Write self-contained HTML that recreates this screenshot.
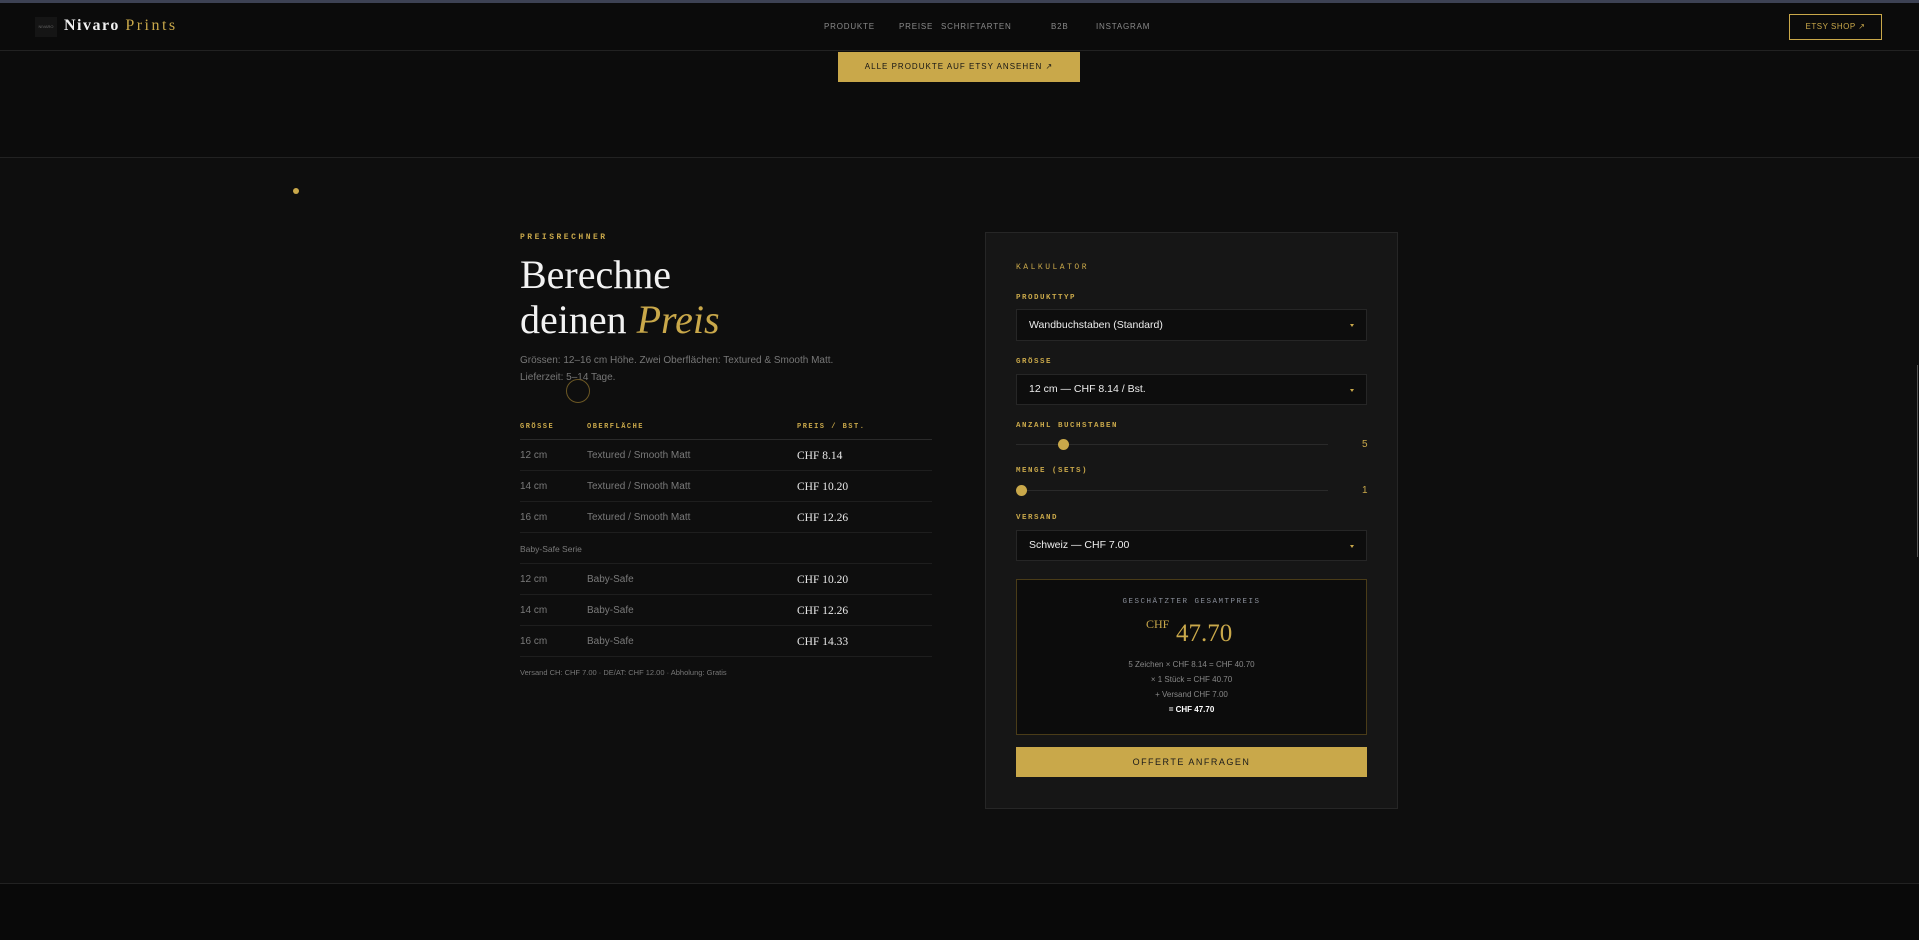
<!DOCTYPE html>
<html><head><meta charset="utf-8"><style>
*{margin:0;padding:0;box-sizing:border-box}
body{width:1919px;height:940px;background:#0c0c0c;font-family:"Liberation Sans",sans-serif;position:relative;overflow:hidden;color:#ddd}
.a{position:absolute}
.gold{color:#c9a84a}
.lbl{font-family:"Liberation Mono",monospace;font-size:8px;letter-spacing:2.5px;color:#c9a84a;font-weight:bold}
.nav a{position:absolute;top:22px;font-size:8px;letter-spacing:.8px;color:#8a8a8a;text-decoration:none}
.row{position:absolute;left:520px;width:412px;height:31px;border-bottom:1px solid #1e1e1e;font-size:10px;color:#7a7a7a}
.row span{position:absolute;top:10px}
.row .p{left:277px;font-family:"Liberation Serif",serif;font-size:11.5px;color:#e8e8e8;top:10px}
.sel{position:absolute;left:1016px;width:351px;background:#0d0d0d;border:1px solid #262626;font-size:10.5px;color:#eee;padding-left:12px}
.sel::after{content:"";position:absolute;right:12px;top:50%;margin-top:-1px;border:2px solid transparent;border-top:3px solid #c9a84a}
.track{position:absolute;left:1016px;width:312px;height:1px;background:#2a2a2a}
.knob{position:absolute;width:11px;height:11px;border-radius:50%;background:#c9a84a}
</style></head><body>
<div class="a" style="left:0;top:0;width:1919px;height:3px;background:#3d4254"></div>
<div class="a" style="left:0;top:3px;width:1919px;height:48px;background:#0b0b0b;border-bottom:1px solid #222"></div>
<div class="a" style="left:35px;top:17px;width:22px;height:20px;background:#151515;font-size:4px;color:#666;text-align:center;line-height:20px">NIVARO</div>
<div class="a" style="left:64px;top:17px;font-family:'Liberation Serif',serif;font-size:16px;letter-spacing:1.5px;color:#f0f0f0;font-weight:bold">Nivaro <span class="gold" style="font-weight:normal;letter-spacing:2.5px">Prints</span></div>
<div class="nav">
<a style="left:824px">PRODUKTE</a><a style="left:899px">PREISE</a><a style="left:941px">SCHRIFTARTEN</a><a style="left:1051px">B2B</a><a style="left:1096px">INSTAGRAM</a>
</div>
<div class="a" style="left:1789px;top:14px;width:93px;height:26px;border:1.5px solid #c9a84a;color:#c9a84a;font-size:8px;letter-spacing:.5px;text-align:center;line-height:23px">ETSY SHOP ↗</div>
<div class="a" style="left:838px;top:52px;width:242px;height:30px;background:#c9a84a;color:#151515;font-size:8px;letter-spacing:1px;text-align:center;line-height:30px">ALLE PRODUKTE AUF ETSY ANSEHEN ↗</div>
<div class="a" style="left:0;top:157px;width:1919px;height:1px;background:#222"></div>
<div class="a" style="left:0;top:158px;width:1919px;height:725px;background:#0e0e0e"></div>
<div class="a" style="left:0;top:883px;width:1919px;height:1px;background:#222"></div>
<div class="a" style="left:0;top:884px;width:1919px;height:56px;background:#090909"></div>
<div class="a" style="left:293px;top:188px;width:6px;height:6px;border-radius:50%;background:#c9a84a"></div>
<div class="a" style="left:1917px;top:365px;width:1px;height:192px;background:#555"></div>

<div class="a lbl" style="left:520px;top:233px">PREISRECHNER</div>
<div class="a" style="left:520px;top:252px;font-family:'Liberation Serif',serif;font-size:40px;line-height:45px;color:#f2f2f2">Berechne<br>deinen <i class="gold">Preis</i></div>
<div class="a" style="left:520px;top:352px;font-size:10px;line-height:17px;color:#777">Grössen: 12–16 cm Höhe. Zwei Oberflächen: Textured &amp; Smooth Matt.<br>Lieferzeit: 5–14 Tage.</div>
<div class="a" style="left:566px;top:379px;width:24px;height:24px;border-radius:50%;border:1px solid #6b5724"></div>

<div class="a lbl" style="left:520px;top:423px;font-size:7px;letter-spacing:1.5px">GRÖSSE</div>
<div class="a lbl" style="left:587px;top:423px;font-size:7px;letter-spacing:1.5px">OBERFLÄCHE</div>
<div class="a lbl" style="left:797px;top:423px;font-size:7px;letter-spacing:1.5px">PREIS / BST.</div>
<div class="a" style="left:520px;top:439px;width:412px;height:1px;background:#2a2a2a"></div>
<div class="row" style="top:440px"><span style="left:0">12 cm</span><span style="left:67px">Textured / Smooth Matt</span><span class="p">CHF 8.14</span></div>
<div class="row" style="top:471px"><span style="left:0">14 cm</span><span style="left:67px">Textured / Smooth Matt</span><span class="p">CHF 10.20</span></div>
<div class="row" style="top:502px"><span style="left:0">16 cm</span><span style="left:67px">Textured / Smooth Matt</span><span class="p">CHF 12.26</span></div>
<div class="row" style="top:533px;font-size:8.5px"><span style="left:0;top:11px">Baby-Safe Serie</span></div>
<div class="row" style="top:564px"><span style="left:0">12 cm</span><span style="left:67px">Baby-Safe</span><span class="p">CHF 10.20</span></div>
<div class="row" style="top:595px"><span style="left:0">14 cm</span><span style="left:67px">Baby-Safe</span><span class="p">CHF 12.26</span></div>
<div class="row" style="top:626px"><span style="left:0">16 cm</span><span style="left:67px">Baby-Safe</span><span class="p">CHF 14.33</span></div>
<div class="a" style="left:520px;top:668px;font-size:7.5px;color:#777">Versand CH: CHF 7.00 · DE/AT: CHF 12.00 · Abholung: Gratis</div>

<div class="a" style="left:985px;top:232px;width:413px;height:577px;background:#161616;border:1px solid #262626"></div>
<div class="a lbl" style="left:1016px;top:263px;color:#c9a84a;font-weight:normal">KALKULATOR</div>
<div class="a lbl" style="left:1016px;top:294px;font-size:7.5px;letter-spacing:1.5px">PRODUKTTYP</div>
<div class="sel" style="top:309px;height:32px;line-height:30px">Wandbuchstaben (Standard)</div>
<div class="a lbl" style="left:1016px;top:358px;font-size:7.5px;letter-spacing:1.5px">GRÖSSE</div>
<div class="sel" style="top:374px;height:31px;line-height:29px">12 cm — CHF 8.14 / Bst.</div>
<div class="a lbl" style="left:1016px;top:422px;font-size:7.5px;letter-spacing:1.5px">ANZAHL BUCHSTABEN</div>
<div class="track" style="top:444px"></div><div class="knob" style="left:1058px;top:439px"></div>
<div class="a gold" style="left:1362px;top:439px;font-size:10px">5</div>
<div class="a lbl" style="left:1016px;top:467px;font-size:7.5px;letter-spacing:1.5px">MENGE (SETS)</div>
<div class="track" style="top:490px"></div><div class="knob" style="left:1016px;top:485px"></div>
<div class="a gold" style="left:1362px;top:485px;font-size:10px">1</div>
<div class="a lbl" style="left:1016px;top:514px;font-size:7.5px;letter-spacing:1.5px">VERSAND</div>
<div class="sel" style="top:530px;height:31px;line-height:29px">Schweiz — CHF 7.00</div>

<div class="a" style="left:1016px;top:579px;width:351px;height:156px;background:#0c0c0c;border:1px solid #4a3c18"></div>
<div class="a" style="left:1016px;top:598px;width:351px;text-align:center;font-family:'Liberation Mono',monospace;font-size:7.5px;letter-spacing:1.5px;color:#8a8f9a">GESCHÄTZTER GESAMTPREIS</div>
<div class="a gold" style="left:1146px;top:617px;font-family:'Liberation Serif',serif;font-size:12px">CHF</div>
<div class="a gold" style="left:1176px;top:620px;font-family:'Liberation Serif',serif;font-size:25px">47.70</div>
<div class="a" style="left:1016px;top:657px;width:351px;text-align:center;font-size:8px;line-height:15px;color:#888">5 Zeichen × CHF 8.14 = CHF 40.70<br>× 1 Stück = CHF 40.70<br>+ Versand CHF 7.00<br><b style="color:#fff">= CHF 47.70</b></div>
<div class="a" style="left:1016px;top:747px;width:351px;height:30px;background:#c9a84a;color:#1a1a1a;font-size:9px;letter-spacing:1.5px;text-align:center;line-height:30px">OFFERTE ANFRAGEN</div>
</body></html>
